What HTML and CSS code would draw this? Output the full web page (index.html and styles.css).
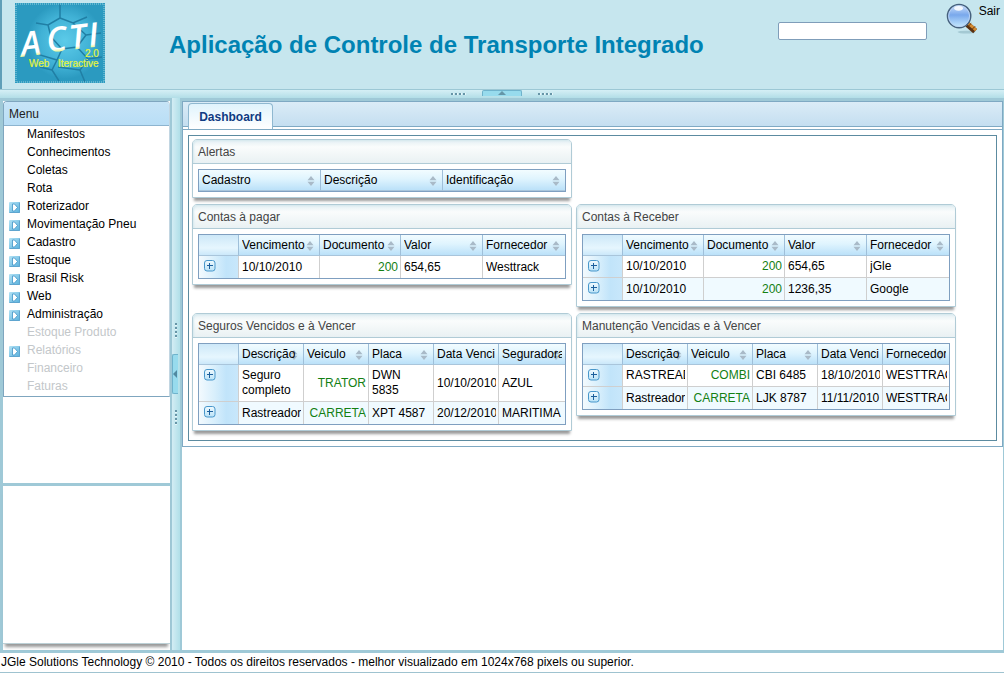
FILE: index.html
```html
<!DOCTYPE html>
<html lang="pt-BR">
<head>
<meta charset="utf-8">
<title>Aplicação de Controle de Transporte Integrado</title>
<link rel="stylesheet" href="styles.css">
</head>
<body>
<svg class="defs" aria-hidden="true">
  <defs>
    <linearGradient id="arrowFill" x1="0" y1="0" x2="1" y2="1"><stop offset="0" stop-color="#b5e3f5"/><stop offset="1" stop-color="#56b0dc"/></linearGradient>
    <linearGradient id="plusFill" x1="0" y1="0" x2="0" y2="1"><stop offset="0" stop-color="#f0fafe"/><stop offset="1" stop-color="#b9e2f7"/></linearGradient>
    <symbol id="arrow" viewBox="0 0 11 11"><rect width="11" height="11" rx="1" fill="url(#arrowFill)"/><path d="M.5 10.500H10.500V.5" fill="none" stroke="#5fa5cf"/><path d="M3.500 2H5.500L8.500 5.500 5.500 9H3.500Z" fill="#fff" stroke="#3f93c6" stroke-width=".8"/></symbol>
    <symbol id="plus" viewBox="0 0 12 12"><rect x=".5" y=".5" width="10.500" height="10.500" rx="2.500" fill="url(#plusFill)" stroke="#4897cb"/><path d="M3 5.500H9M5.500 3V9" stroke="#1c5f9c"/></symbol>
    <symbol id="sort" viewBox="0 0 8 10"><path d="M4 0 7.500 4.200H.5ZM4 10 .5 5.800H7.500Z" fill="#a9bac8"/></symbol>
  </defs>
</svg>
<header class="top">
  <svg class="logo" viewBox="0 0 90 80" role="img" aria-label="ACTI 2.0 Web Iteractive">
    <defs>
      <radialGradient id="glow"><stop offset="0" stop-color="#5ccbe9"/><stop offset=".65" stop-color="#41b2d6"/><stop offset="1" stop-color="#2b9ac0"/></radialGradient>
      <linearGradient id="ink" x1="0" y1="0" x2="0" y2="1"><stop offset="0" stop-color="#fff"/><stop offset=".72" stop-color="#fff"/><stop offset=".82" stop-color="#e2f25a"/></linearGradient>
    </defs>
    <rect width="90" height="80" fill="#2b9ac0"/>
    <ellipse cx="50" cy="38" rx="38" ry="38" fill="url(#glow)"/>
    <path d="M45 1V15L33 22 21 20M45 15 58 20 72 14M33 22 36 34 47 46 42 57 25 52 21 41 7 48M47 46 62 44 71 32 58 20M62 44 73 56 87 54M42 57 37 67 44 78M73 56 65 67 70 79M37 67 25 64M65 67 43 64M71 32 86 30" fill="none" stroke="#207fa5" stroke-width="1.500"/>
    <rect x="1" y="1" width="88" height="78" fill="none" stroke="#62b5cf" stroke-width="2" stroke-dasharray="1 1"/>
    <g transform="rotate(-7 45 35)"><text class="logo-name" x="5" y="49">A</text><text class="logo-name" x="31" y="48">C</text><text class="logo-name" x="54" y="48">T</text><text class="logo-name" x="73" y="48">I</text></g>
    <text class="logo-small" x="70" y="54">2.0</text>
    <text class="logo-small" x="14" y="64">Web</text><text class="logo-small" x="43" y="64">Iteractive</text>
  </svg>
  <h1>Aplicação de Controle de Transporte Integrado</h1>
  <form class="search">
    <input type="text" aria-label="Pesquisar">
    <button type="button" aria-label="Pesquisar">
      <svg class="lens" viewBox="0 0 34 34">
        <defs><linearGradient id="glass" x1="0" y1="0" x2="0" y2="1"><stop offset="0" stop-color="#cfe1fb"/><stop offset=".45" stop-color="#79a8ec"/><stop offset="1" stop-color="#c9edff"/></linearGradient></defs>
        <ellipse cx="21" cy="30" rx="9" ry="1.500" fill="#8db5c2" opacity=".6"/>
        <path d="M22 22 30 29" stroke="#573012" stroke-width="6"/><path d="M23 21 31 28" stroke="#d48b30" stroke-width="3"/><path d="M22 25 26 21M26 28 30 24" stroke="#61360e"/>
        <circle cx="13.500" cy="13.500" r="12" fill="url(#glass)" stroke="#46617d" stroke-width="1.500"/>
        <circle cx="13.500" cy="13.500" r="10.800" fill="none" stroke="#b9d2f3"/>
        <ellipse cx="13" cy="5.500" rx="4.500" ry="2.500" fill="#fff" opacity=".85"/>
      </svg>
    </button>
  </form>
  <a class="exit" href="#">Sair</a>
</header>
<div class="split-h">
  <span class="grip"></span>
  <button type="button" class="fold" aria-label="Recolher topo"><svg viewBox="0 0 8 4" width="8" height="4"><path d="M0 4 4 0 8 4Z" fill="#6596a8"/></svg></button>
  <span class="grip"></span>
</div>
<div class="main">
  <aside class="side">
    <nav class="menu-area">
      <div class="menu">
        <h2>Menu</h2>
        <ul>
          <li><a href="#">Manifestos</a></li>
          <li><a href="#">Conhecimentos</a></li>
          <li><a href="#">Coletas</a></li>
          <li><a href="#">Rota</a></li>
          <li><svg><use href="#arrow"/></svg><a href="#">Roterizador</a></li>
          <li><svg><use href="#arrow"/></svg><a href="#">Movimentação Pneu</a></li>
          <li><svg><use href="#arrow"/></svg><a href="#">Cadastro</a></li>
          <li><svg><use href="#arrow"/></svg><a href="#">Estoque</a></li>
          <li><svg><use href="#arrow"/></svg><a href="#">Brasil Risk</a></li>
          <li><svg><use href="#arrow"/></svg><a href="#">Web</a></li>
          <li><svg><use href="#arrow"/></svg><a href="#">Administração</a></li>
          <li class="off"><a>Estoque Produto</a></li>
          <li class="off"><svg><use href="#arrow"/></svg><a>Relatórios</a></li>
          <li class="off"><a>Financeiro</a></li>
          <li class="off"><a>Faturas</a></li>
        </ul>
      </div>
    </nav>
    <div class="blank"><div class="blank-panel"></div></div>
  </aside>
  <div class="split-v">
    <span class="grip"></span>
    <button type="button" class="fold" aria-label="Recolher menu"><svg viewBox="0 0 4 8" width="4" height="8"><path d="M4 0 0 4 4 8Z" fill="#5189a0"/></svg></button>
    <span class="grip"></span>
  </div>
  <main class="content">
    <section class="tabbox">
      <div class="tabs" role="tablist"><button type="button" class="tab" role="tab" aria-selected="true">Dashboard</button></div>
      <div class="board">
        <section class="card left">
          <h3>Alertas</h3>
          <div class="card-body">
            <table>
              <colgroup><col class="third"><col class="third"><col></colgroup>
              <thead><tr><th><div>Cadastro</div><svg><use href="#sort"/></svg></th><th><div>Descrição</div><svg><use href="#sort"/></svg></th><th><div>Identificação</div><svg><use href="#sort"/></svg></th></tr></thead>
            </table>
          </div>
        </section>
        <section class="card left">
          <h3>Contas à pagar</h3>
          <div class="card-body">
            <table>
              <colgroup><col class="exp"><col class="wide"><col class="wide"><col><col></colgroup>
              <thead><tr><th></th><th><div>Vencimento</div><svg><use href="#sort"/></svg></th><th><div>Documento</div><svg><use href="#sort"/></svg></th><th><div>Valor</div><svg><use href="#sort"/></svg></th><th><div>Fornecedor</div><svg><use href="#sort"/></svg></th></tr></thead>
              <tbody>
                <tr><td class="x"><button type="button" aria-label="Expandir"><svg><use href="#plus"/></svg></button></td><td><div>10/10/2010</div></td><td class="num"><div>200</div></td><td><div>654,65</div></td><td><div>Westtrack</div></td></tr>
              </tbody>
            </table>
          </div>
        </section>
        <section class="card">
          <h3>Contas à Receber</h3>
          <div class="card-body">
            <table>
              <colgroup><col class="exp"><col class="wide"><col class="wide"><col><col></colgroup>
              <thead><tr><th></th><th><div>Vencimento</div><svg><use href="#sort"/></svg></th><th><div>Documento</div><svg><use href="#sort"/></svg></th><th><div>Valor</div><svg><use href="#sort"/></svg></th><th><div>Fornecedor</div><svg><use href="#sort"/></svg></th></tr></thead>
              <tbody>
                <tr><td class="x"><button type="button" aria-label="Expandir"><svg><use href="#plus"/></svg></button></td><td><div>10/10/2010</div></td><td class="num"><div>200</div></td><td><div>654,65</div></td><td><div>jGle</div></td></tr>
                <tr><td class="x"><button type="button" aria-label="Expandir"><svg><use href="#plus"/></svg></button></td><td><div>10/10/2010</div></td><td class="num"><div>200</div></td><td><div>1236,35</div></td><td><div>Google</div></td></tr>
              </tbody>
            </table>
          </div>
        </section>
        <section class="card left">
          <h3>Seguros Vencidos e à Vencer</h3>
          <div class="card-body">
            <table>
              <colgroup><col class="exp"><col class="narrow"><col class="narrow"><col class="narrow"><col class="narrow"><col></colgroup>
              <thead><tr><th></th><th><div>Descrição</div><svg><use href="#sort"/></svg></th><th><div>Veiculo</div><svg><use href="#sort"/></svg></th><th><div>Placa</div><svg><use href="#sort"/></svg></th><th><div>Data Vencimento</div></th><th><div>Seguradora</div><svg><use href="#sort"/></svg></th></tr></thead>
              <tbody>
                <tr><td class="x"><button type="button" aria-label="Expandir"><svg><use href="#plus"/></svg></button></td><td><div>Seguro completo</div></td><td class="num"><div>TRATOR</div></td><td><div>DWN<br>5835</div></td><td><div>10/10/2010</div></td><td><div>AZUL</div></td></tr>
                <tr><td class="x"><button type="button" aria-label="Expandir"><svg><use href="#plus"/></svg></button></td><td><div>Rastreador</div></td><td class="num"><div>CARRETA</div></td><td><div>XPT 4587</div></td><td><div>20/12/2010</div></td><td><div>MARITIMA</div></td></tr>
              </tbody>
            </table>
          </div>
        </section>
        <section class="card">
          <h3>Manutenção Vencidas e à Vencer</h3>
          <div class="card-body">
            <table>
              <colgroup><col class="exp"><col class="narrow"><col class="narrow"><col class="narrow"><col class="narrow"><col></colgroup>
              <thead><tr><th></th><th><div>Descrição</div><svg><use href="#sort"/></svg></th><th><div>Veiculo</div><svg><use href="#sort"/></svg></th><th><div>Placa</div><svg><use href="#sort"/></svg></th><th><div>Data Vencimento</div></th><th><div>Fornecedor</div><svg><use href="#sort"/></svg></th></tr></thead>
              <tbody>
                <tr><td class="x"><button type="button" aria-label="Expandir"><svg><use href="#plus"/></svg></button></td><td><div>RASTREADOR</div></td><td class="num"><div>COMBI</div></td><td><div>CBI 6485</div></td><td><div>18/10/2010</div></td><td><div>WESTTRACK</div></td></tr>
                <tr><td class="x"><button type="button" aria-label="Expandir"><svg><use href="#plus"/></svg></button></td><td><div>Rastreador</div></td><td class="num"><div>CARRETA</div></td><td><div>LJK 8787</div></td><td><div>11/11/2010</div></td><td><div>WESTTRACK</div></td></tr>
              </tbody>
            </table>
          </div>
        </section>
      </div>
    </section>
  </main>
</div>
<footer>JGle Solutions Technology © 2010 - Todos os direitos reservados - melhor visualizado em 1024x768 pixels ou superior.</footer>
</body>
</html>
```
FILE: styles.css
```css
* { box-sizing: border-box; }
body {
  margin: 0;
  min-height: 100vh;
  padding-bottom: 1px;
  display: flex;
  flex-direction: column;
  background: #fff;
  color: #000;
  font: 12px/15px "Liberation Sans", Arial, sans-serif;
}
h1, h2, h3, ul { margin: 0; padding: 0; font-weight: normal; }
ul { list-style: none; }
a { color: inherit; text-decoration: none; }
button { padding: 0; border: 0; background: none; font: inherit; }
svg { display: block; }
.defs { position: absolute; width: 0; height: 0; }

.top {
  display: flex;
  align-items: flex-start;
  height: 89px;
  padding: 3px 4px 0 13px;
  border-left: 2px solid #5f9fb8;
  background: #c6e6ee;
}
.logo { width: 90px; height: 80px; flex: none; }
.logo-name { font: italic 600 34px "Open Sans", sans-serif; fill: url(#ink); }
.logo-small { font: 10px "Liberation Sans", Arial, sans-serif; fill: #e6f53c; stroke: #e6f53c; stroke-width: .2px; }
h1 {
  margin: 28px 0 0 64px;
  color: #0083b3;
  font-size: 24px;
  font-weight: bold;
  line-height: 28px;
  white-space: nowrap;
}
.search { display: flex; align-items: flex-start; gap: 19px; margin-left: auto; }
.search input {
  width: 149px;
  height: 18px;
  margin-top: 19px;
  border: 1px solid #7f9db9;
  border-radius: 2px;
  background: #fff;
  font: inherit;
}
.lens { width: 33px; height: 33px; }
.exit { line-height: 16px; }

.split-h, .split-v {
  display: flex;
  align-items: flex-start;
  justify-content: center;
  gap: 16px;
}
.split-h {
  height: 9px;
  border-top: 1px solid #9cc8d5;
  background: linear-gradient(#d5eff5, #b2dee7);
}
.split-h .fold {
  display: flex;
  justify-content: center;
  width: 40px;
  height: 6px;
  border: 1px solid #6fb3cc;
  border-bottom: 0;
  border-radius: 2px 2px 0 0;
  background: #97dbed;
}
.grip { background: repeating-linear-gradient(90deg, #6795a7 0 2px, #e7f6f9 2px 3px, transparent 3px 4px); }
.split-h .grip { width: 15px; height: 2px; margin-top: 3px; }

.main {
  display: flex;
  flex: 1;
  padding: 3px 1px 3px 3px;
  background: #9fc9d7;
}
.side {
  width: 167px;
  flex: none;
  display: grid;
  grid-template-rows: 7fr 3fr;
  gap: 3px;
}
.menu-area { background: #fff; }
.menu { border: 1px solid #7fa6bf; border-right-color: #c2d6e2; border-radius: 4px 4px 0 0; }
.menu h2 {
  height: 24px;
  padding-left: 5px;
  border-bottom: 1px solid #8db4cf;
  border-radius: 3px 3px 0 0;
  background: linear-gradient(#c6e4f7, #b9def6);
  color: #222;
  font-size: 12px;
  line-height: 24px;
}
.menu li { display: grid; grid-template-columns: 18px 1fr; align-items: start; height: 18px; padding-left: 5px; }
.menu li a { grid-column: 2; line-height: 16px; }
.menu li svg { grid-column: 1; grid-row: 1; width: 11px; height: 11px; margin-top: 4px; }
.off { color: #c3c7ca; }
.blank { padding-bottom: 6px; background: #fff; }
.blank-panel { height: 100%; border-bottom: 1px solid #bcd0d6; box-shadow: 0 5px 3px -2px #999; }

.split-v {
  width: 8px;
  flex: none;
  flex-direction: column;
  margin: -3px 2px 0;
  background: linear-gradient(90deg, #d3edf4, #b0dfe8);
}
.split-v .grip {
  width: 2px;
  height: 15px;
  margin-left: 3px;
  background: repeating-linear-gradient(#6795a7 0 2px, #e7f6f9 2px 3px, transparent 3px 4px);
}
.split-v .fold {
  display: flex;
  align-items: center;
  width: 6px;
  height: 40px;
  border: 1px solid #6fb3cc;
  border-right: 0;
  border-radius: 2px 0 0 2px;
  background: #97dbed;
}

.content { flex: 1; min-width: 0; background: #fff; }
.tabbox { padding-bottom: 5px; border: 1px solid #7fa9c3; }
.tabs {
  height: 28px;
  padding: 1px 5px 0;
  border-bottom: 1px solid #7fa9c3;
  background: linear-gradient(#dbecf7, #c4def0 24px, #7fa9c3 24px, #7fa9c3 25px, #fff 25px);
}
.tab {
  display: block;
  width: 85px;
  height: 26px;
  border: 1px solid #8fb8d0;
  border-bottom: 0;
  border-radius: 4px 4px 0 0;
  background: linear-gradient(#e0f3fc, #fff);
  color: #0f3b82;
  font-weight: bold;
  line-height: 22px;
}
.board {
  display: grid;
  grid-template-columns: repeat(2, minmax(0, 380px));
  align-items: start;
  gap: 6px 4px;
  margin: 5px 5px 0;
  padding: 3px 3px 9px;
  border: 1px solid #5c8ba0;
}
.card {
  border: 1px solid #b0cbd6;
  border-radius: 5px 5px 0 0;
  background: #fff;
  box-shadow: 0 5px 3px -2px #999;
}
.left { grid-column: 1; }
.card h3 {
  height: 24px;
  padding-left: 5px;
  border-bottom: 1px solid #b0cbd6;
  border-radius: 4px 4px 0 0;
  background: linear-gradient(#e3eff3, #fafcfc 30%, #e9f1f3);
  box-shadow: inset 1px 1px 2px #d5e8ee;
  color: #444;
  font-size: 12px;
  line-height: 24px;
}
.card-body { padding: 5px; }
table {
  width: 100%;
  border: 1px solid #7f9fc0;
  border-collapse: separate;
  border-spacing: 0;
  table-layout: fixed;
}
.exp { width: 40px; }
.wide { width: 81px; }
.narrow { width: 65px; }
.third { width: 122px; }
th, td { text-align: left; border-right: 1px solid #cfcfcf; }
th:last-child, td:last-child { border-right: 0; }
th {
  position: relative;
  height: 21px;
  padding: 0 3px;
  border-bottom: 1px solid #a9c5db;
  border-right-color: #9fbfd9;
  background: linear-gradient(#f2fcff, #dff4fe 45%, #bbe1f9);
  font-weight: normal;
}
th:first-child:empty { background: linear-gradient(#cde8f8, #e6f6fe 65%, #cbe8fa); }
th div { position: relative; z-index: 1; padding-top: 1px; line-height: 19px; overflow: hidden; white-space: nowrap; }
th svg { position: absolute; top: 6px; right: 5px; width: 8px; height: 10px; }
td { height: 22px; padding: 3px 2px 3px 3px; border-bottom: 1px solid #cfcfcf; vertical-align: middle; }
tr:last-child td { border-bottom: 0; }
td div { overflow: hidden; }
tbody tr:nth-child(even) td { background: #f0faff; }
.num { color: #138013; text-align: right; }
tbody tr .x, tbody tr:nth-child(even) .x { padding: 4px 5px 0; background: linear-gradient(90deg, #f3fafe, #d8effc 40%, #c1e4fa 70%, #c8e7fb); vertical-align: top; }
.x svg { width: 12px; height: 12px; }

footer {
  height: 20px;
  padding-left: 1px;
  border-bottom: 1px solid #9fc3d0;
  line-height: 18px;
}
```
